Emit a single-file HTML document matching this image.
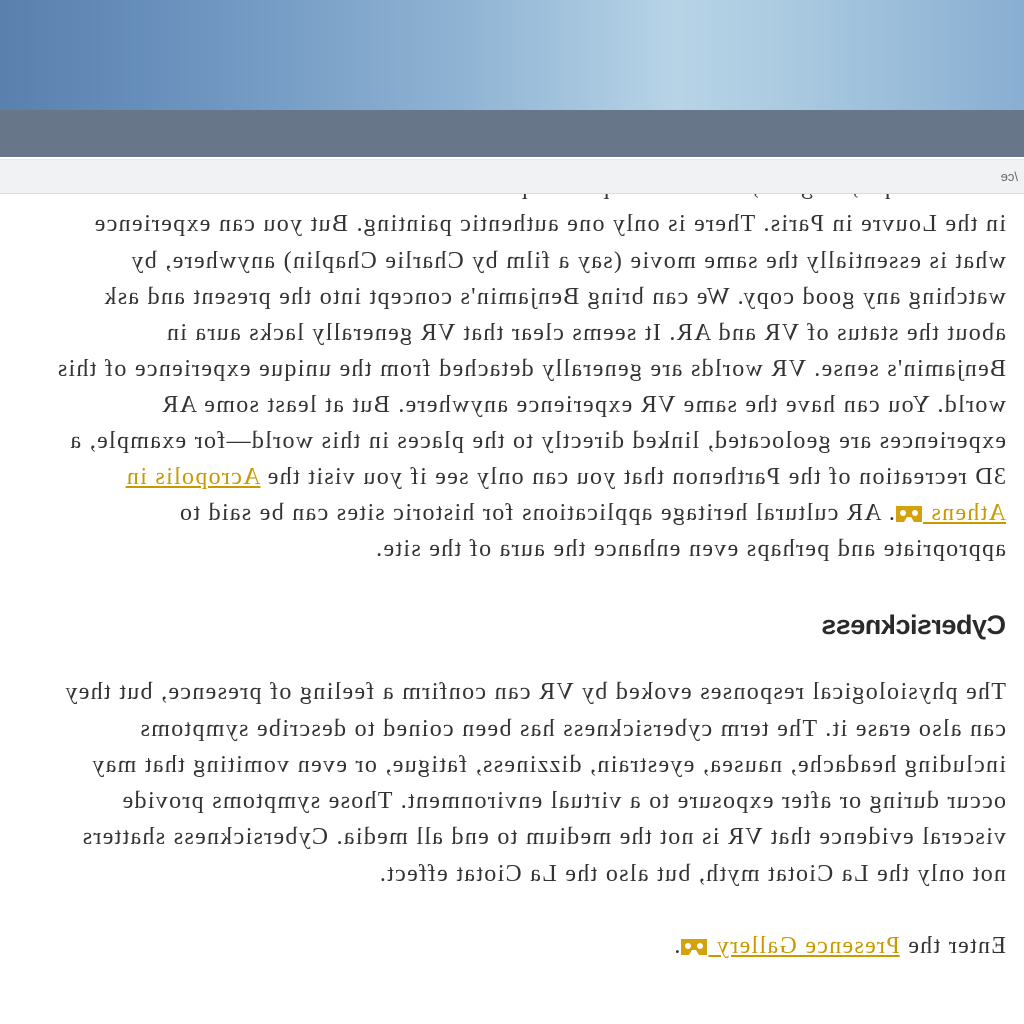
<!DOCTYPE html>
<html><head><meta charset="utf-8"><style>
html,body{margin:0;padding:0;width:1024px;height:1024px;overflow:hidden;background:#fff}
#m{position:absolute;left:0;top:0;width:1024px;height:1024px;transform:scaleX(-1);overflow:hidden}
.hdr{position:absolute;left:0;top:0;width:1024px;height:110px;background:linear-gradient(90deg,#88aed1 0%,#a9c9e0 22%,#b7d4e7 34%,#8fb3d3 55%,#6d95c0 80%,#5a80ae 100%)}
.nav{position:absolute;left:0;top:110px;width:1024px;height:47px;background:#677689}
.addr{position:absolute;left:0;top:159px;width:1024px;height:33px;background:#f1f2f4;border-bottom:1px solid #dcdcdc;border-top:1px solid #e6e6e6;font:13px "Liberation Sans",sans-serif;color:#666}
.addr span{position:absolute;left:6px;top:9px}
.l{position:absolute;left:18px;white-space:nowrap;font:24px/26px "Liberation Serif",serif;color:#333;letter-spacing:1.3px}
a{color:#c89a00;text-decoration:underline}
h2{position:absolute;left:18px;top:610px;margin:0;font:bold 27px "Liberation Sans",sans-serif;color:#2a2a2a;letter-spacing:-0.5px}
svg{vertical-align:-3px}
</style></head><body><div id="m">
<div class="l" style="top:174px">that is unique, original, rooted in a specific place: the Mona Lisa</div>
<div class="addr"><span>/ce</span></div>
<div class="hdr"></div><div class="nav"></div>
<div class="l" style="top:211px">in the Louvre in Paris. There is only one authentic painting. But you can experience</div>
<div class="l" style="top:248px">what is essentially the same movie (say a film by Charlie Chaplin) anywhere, by</div>
<div class="l" style="top:284px">watching any good copy. We can bring Benjamin's concept into the present and ask</div>
<div class="l" style="top:320px">about the status of VR and AR. It seems clear that VR generally lacks aura in</div>
<div class="l" style="top:356px">Benjamin's sense. VR worlds are generally detached from the unique experience of this</div>
<div class="l" style="top:392px">world. You can have the same VR experience anywhere. But at least some AR</div>
<div class="l" style="top:428px">experiences are geolocated, linked directly to the places in this world—for example, a</div>
<div class="l" style="top:464px">3D recreation of the Parthenon that you can only see if you visit the <a>Acropolis in</a></div>
<div class="l" style="top:500px"><a>Athens <svg width="28" height="18" viewBox="0 0 28 18"><path fill="#d4a20c" d="M1 1h26v16h-8l-3-5h-4l-3 5H1z"/><circle cx="8" cy="8" r="3" fill="#fff"/><circle cx="20" cy="8" r="3" fill="#fff"/></svg></a>. AR cultural heritage applications for historic sites can be said to</div>
<div class="l" style="top:536px">appropriate and perhaps even enhance the aura of the site.</div>
<h2>Cybersickness</h2>
<div class="l" style="top:679px">The physiological responses evoked by VR can confirm a feeling of presence, but they</div>
<div class="l" style="top:716px">can also erase it. The term cybersickness has been coined to describe symptoms</div>
<div class="l" style="top:752px">including headache, nausea, eyestrain, dizziness, fatigue, or even vomiting that may</div>
<div class="l" style="top:788px">occur during or after exposure to a virtual environment. Those symptoms provide</div>
<div class="l" style="top:824px">visceral evidence that VR is not the medium to end all media. Cybersickness shatters</div>
<div class="l" style="top:861px">not only the La Ciotat myth, but also the La Ciotat effect.</div>
<div class="l" style="top:933px">Enter the <a>Presence Gallery <svg width="28" height="18" viewBox="0 0 28 18"><path fill="#d4a20c" d="M1 1h26v16h-8l-3-5h-4l-3 5H1z"/><circle cx="8" cy="8" r="3" fill="#fff"/><circle cx="20" cy="8" r="3" fill="#fff"/></svg></a>.</div>
</div></body></html>
